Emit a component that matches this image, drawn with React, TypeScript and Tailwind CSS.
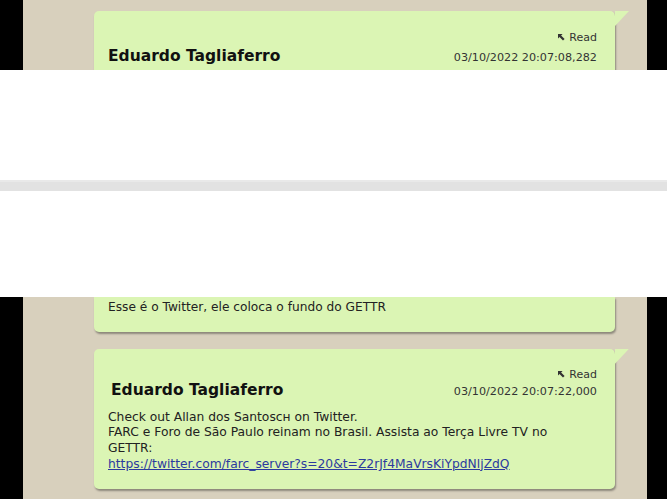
import type { ReactNode } from "react";

const body = "font-['DejaVu_Sans','Verdana',sans-serif]";

const Arrow = () => (
  <svg width="7" height="7" viewBox="0 0 7 7" className="mr-[4px]">
    <path d="M0 0 L4.6 0 L3.1 1.5 L6.6 5 L5 6.6 L1.5 3.1 L0 4.6 Z" fill="#333" />
  </svg>
);

const Strip = ({ children, className = "" }: { children: ReactNode; className?: string }) => (
  <div className={`flex shrink-0 overflow-hidden ${className}`}>
    <div className="w-[23px] shrink-0 bg-black" />
    <div className="flex flex-1 flex-col bg-[#d8d0bd] pl-[71px]">{children}</div>
    <div className="w-[20px] shrink-0 bg-black" />
  </div>
);

const Bubble = ({
  children,
  className = "",
  tail = true,
}: {
  children: ReactNode;
  className?: string;
  tail?: boolean;
}) => (
  <div
    className={`relative w-[521px] shrink-0 bg-[#dbf5b4] pl-[14px] pr-[18px] shadow-[1px_2px_2px_rgba(0,0,0,0.35)] ${body} ${className}`}
  >
    {tail && (
      <span className="absolute left-full top-0 h-[15px] w-[14px] bg-[#dbf5b4] [clip-path:polygon(0_0,100%_0,0_100%)]" />
    )}
    {children}
  </div>
);

const Header = ({ date, nameClass = "" }: { date: string; nameClass?: string }) => (
  <>
    <div className="flex items-center justify-end text-[11px] leading-[13px] text-[#333]">
      <Arrow />
      Read
    </div>
    <div className="flex items-baseline justify-between">
      <span className={`text-[15.5px] font-bold leading-[18px] text-[#111] ${nameClass}`}>
        Eduardo Tagliaferro
      </span>
      <span className="text-[11.2px] leading-[13px] text-[#333]">{date}</span>
    </div>
  </>
);

export default function App() {
  return (
    <div className="flex h-[499px] w-[667px] flex-col overflow-hidden bg-white">
      {/* top strip, cut by the blank band */}
      <Strip className="h-[70px]">
        <Bubble className="mt-[11px] rounded-[5px] pb-[40px] pt-[20px]">
          <Header date="03/10/2022 20:07:08,282" nameClass="mt-[3px]" />
        </Bubble>
      </Strip>

      {/* blank band */}
      <div className="h-[227px] shrink-0 bg-white pt-[110px]">
        <div className="h-[11px] border-t-2 border-[#e9e9e9] bg-[#e2e2e2]" />
      </div>

      <Strip className="flex-1">
        <Bubble tail={false} className="rounded-b-[5px] pb-[16px] pt-[3px]">
          <p className="text-[12.2px] leading-[15.7px] text-[#222]">
            Esse é o Twitter, ele coloca o fundo do GETTR
          </p>
        </Bubble>

        <Bubble className="mt-[17px] rounded-[5px] pb-[16px] pt-[19px]">
          <Header date="03/10/2022 20:07:22,000" nameClass="ml-[3px]" />
          <div className="mt-[11px] text-[12.3px] leading-[15.7px] text-[#222]">
            <p>Check out Allan dos Santosᴄʜ on Twitter.</p>
            <p>
              FARC e Foro de São Paulo reinam no Brasil. Assista ao Terça Livre TV no
              <br />
              GETTR:
            </p>
            <a href="#" className="text-[#2c3a9e] underline">
              https://twitter.com/farc_server?s=20&amp;t=Z2rJf4MaVrsKiYpdNljZdQ
            </a>
          </div>
        </Bubble>
      </Strip>
    </div>
  );
}
